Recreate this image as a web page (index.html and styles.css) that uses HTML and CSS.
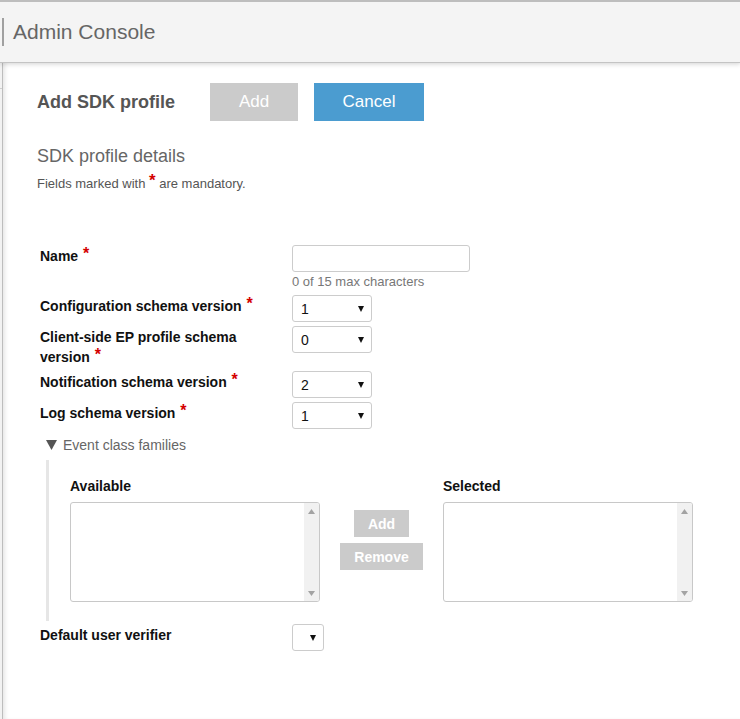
FILE: index.html
```html
<!DOCTYPE html>
<html>
<head>
<meta charset="utf-8">
<title>Admin Console</title>
<link rel="stylesheet" href="styles.css">
</head>
<body>
<header class="topbar">
  <div class="brand">Admin Console</div>
</header>
<div class="main">
  <aside class="sidebar"><div class="side-item"></div></aside>
  <section class="content">
    <div class="title-row">
      <h1 class="page-title">Add SDK profile</h1>
      <button class="btn btn-disabled">Add</button>
      <button class="btn btn-primary">Cancel</button>
    </div>
    <h2 class="section-title">SDK profile details</h2>
    <p class="note">Fields marked with <span class="req-big">*</span> are mandatory.</p>

    <div class="form">
      <div class="row row-name">
        <div class="label">Name <span class="req">*</span></div>
        <div class="control">
          <div class="text-input"></div>
          <div class="hint">0 of 15 max characters</div>
        </div>
      </div>
      <div class="row">
        <div class="label">Configuration schema version <span class="req">*</span></div>
        <div class="control"><div class="select"><span>1</span><svg class="caret" width="6" height="6" viewBox="0 0 6 6"><path d="M0 0H6L3 6Z"/></svg></div></div>
      </div>
      <div class="row">
        <div class="label">Client-side EP profile schema<br>version <span class="req">*</span></div>
        <div class="control"><div class="select"><span>0</span><svg class="caret" width="6" height="6" viewBox="0 0 6 6"><path d="M0 0H6L3 6Z"/></svg></div></div>
      </div>
      <div class="row">
        <div class="label">Notification schema version <span class="req">*</span></div>
        <div class="control"><div class="select"><span>2</span><svg class="caret" width="6" height="6" viewBox="0 0 6 6"><path d="M0 0H6L3 6Z"/></svg></div></div>
      </div>
      <div class="row">
        <div class="label">Log schema version <span class="req">*</span></div>
        <div class="control"><div class="select"><span>1</span><svg class="caret" width="6" height="6" viewBox="0 0 6 6"><path d="M0 0H6L3 6Z"/></svg></div></div>
      </div>

      <div class="disclosure">
        <svg class="tri" width="11" height="10" viewBox="0 0 11 10"><path d="M0 0H11L5.5 10Z"/></svg>
        <span>Event class families</span>
      </div>
      <div class="panel">
        <div class="col">
          <div class="col-label">Available</div>
          <div class="listbox">
            <div class="scroll">
              <svg width="7" height="5" viewBox="0 0 7 5"><path d="M0 5H7L3.5 0Z"/></svg>
              <svg width="7" height="5" viewBox="0 0 7 5"><path d="M0 0H7L3.5 5Z"/></svg>
            </div>
          </div>
        </div>
        <div class="mid">
          <button class="sbtn">Add</button>
          <button class="sbtn">Remove</button>
        </div>
        <div class="col">
          <div class="col-label">Selected</div>
          <div class="listbox">
            <div class="scroll">
              <svg width="7" height="5" viewBox="0 0 7 5"><path d="M0 5H7L3.5 0Z"/></svg>
              <svg width="7" height="5" viewBox="0 0 7 5"><path d="M0 0H7L3.5 5Z"/></svg>
            </div>
          </div>
        </div>
      </div>

      <div class="row row-verifier">
        <div class="label">Default user verifier</div>
        <div class="control"><div class="select select-small"><span></span><svg class="caret" width="6" height="6" viewBox="0 0 6 6"><path d="M0 0H6L3 6Z"/></svg></div></div>
      </div>
    </div>
  </section>
</div>
</body>
</html>
```

FILE: styles.css
```css
* { box-sizing: border-box; }
html, body { margin: 0; padding: 0; }
body {
  font-family: "Liberation Sans", Arial, sans-serif;
  background: #fff;
  color: #111;
  overflow: hidden;
}

.topbar {
  height: 63px;
  background: #f4f4f4;
  border-top: 2px solid #bdbdbd;
  border-bottom: 1px solid #c4c4c4;
  box-shadow: 0 2px 4px rgba(0,0,0,0.12);
  display: flex;
  align-items: center;
  padding-left: 2px;
  position: relative;
  z-index: 2;
}
.brand {
  border-left: 2px solid #a0a0a0;
  height: 28px;
  line-height: 28px;
  padding-left: 9px;
  font-size: 21px;
  color: #666;
}

.main {
  display: flex;
  min-height: calc(100vh - 63px);
}
.sidebar {
  width: 2px;
  background: #f2f2f2;
  flex: none;
}
.side-item {
  height: 26px;
  border-bottom: 1px solid #cfcfcf;
}
.content {
  flex: 1;
  border-left: 1px solid #bdbdbd;
  box-shadow: inset 4px 0 4px -2px rgba(0,0,0,0.10);
  padding: 20px 0 0 34px;
}

.title-row {
  display: flex;
  align-items: center;
  height: 38px;
}
.page-title {
  margin: 0 35px 0 0;
  font-size: 18px;
  font-weight: bold;
  color: #555;
  width: 138px;
  white-space: nowrap;
}
.btn {
  font-family: inherit;
  font-size: 17px;
  color: #fff;
  border: none;
  height: 38px;
  padding: 0;
  cursor: default;
}
.btn-disabled { background: #cbcbcb; width: 88px; margin-right: 16px; }
.btn-primary { background: #4b9cd0; width: 110px; }

.section-title {
  margin: 25px 0 0 0;
  font-size: 18px;
  font-weight: normal;
  color: #666;
  line-height: 20px;
}
.note {
  margin: 8px 0 0 0;
  font-size: 13px;
  color: #555;
  line-height: 18px;
}
.req-big {
  color: #d40000;
  font-weight: bold;
  font-size: 17px;
  position: relative;
  top: -2px;
}

.form {
  margin: 52px 0 0 3px;
}
.row {
  display: flex;
  margin-bottom: 4px;
}
.row-name { margin-bottom: 4px; }
.label {
  width: 252px;
  flex: none;
  font-size: 14px;
  font-weight: bold;
  line-height: 20px;
  padding-top: 1px;
  color: #111;
}
.req {
  color: #d40000;
  font-size: 16px;
  position: relative;
  top: -2px;
  margin-left: 1px;
}
.text-input {
  width: 178px;
  height: 27px;
  border: 1px solid #cccccc;
  border-radius: 3px;
  background: #fff;
}
.hint {
  font-size: 13px;
  color: #777;
  line-height: 19px;
}
.select {
  width: 80px;
  height: 27px;
  border: 1px solid #cccccc;
  border-radius: 3px;
  display: flex;
  align-items: center;
  justify-content: space-between;
  padding: 1px 7px 0 8px;
  font-size: 14px;
  color: #111;
}
.select-small { width: 32px; }
.caret { fill: #111; margin-top: 0; }

.disclosure {
  display: flex;
  align-items: center;
  margin: 6px 0 0 6px;
  height: 20px;
  font-size: 14px;
  color: #666;
}
.tri { fill: #555; margin-right: 6px; margin-top: -1px; }

.panel {
  margin: 5px 0 0 6px;
  border-left: 3px solid #e6e6e6;
  padding: 16px 0 19px 21px;
  display: flex;
}
.col { width: 250px; flex: none; }
.col-label {
  font-size: 14px;
  font-weight: bold;
  line-height: 20px;
  margin-bottom: 6px;
}
.listbox {
  height: 100px;
  border: 1px solid #c8c8c8;
  border-radius: 3px;
  display: flex;
  justify-content: flex-end;
  overflow: hidden;
}
.scroll {
  width: 15px;
  background: #f1f1f1;
  display: flex;
  flex-direction: column;
  justify-content: space-between;
  align-items: center;
  padding: 6px 0 5px 0;
  fill: #a3a3a3;
}
.mid {
  width: 123px;
  flex: none;
  display: flex;
  flex-direction: column;
  align-items: center;
  padding-top: 34px;
  gap: 6px;
}
.sbtn {
  font-family: inherit;
  font-size: 14px;
  font-weight: bold;
  color: #fff;
  background: #cbcbcb;
  border: none;
  height: 27px;
  padding: 0 14px;
}
.row-verifier { margin-top: 3px; }
```
